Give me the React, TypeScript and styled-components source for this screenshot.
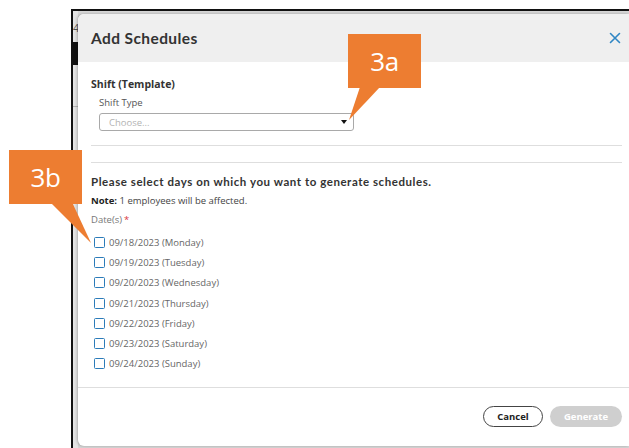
import React from 'react';
import styled, { createGlobalStyle } from 'styled-components';

const GlobalStyle = createGlobalStyle`
  html, body {
    margin: 0;
    padding: 0;
    background: #ffffff;
  }
  body {
    font-family: 'Open Sans', 'Noto Sans', sans-serif;
  }
`;

const Stage = styled.div`
  position: relative;
  width: 629px;
  height: 448px;
  overflow: hidden;
  padding: 9px 0 0 71px;
  box-sizing: border-box;
  background: #ffffff;
`;

const Frame = styled.div`
  height: 100%;
  display: flex;
  box-sizing: border-box;
  border-top: 2px solid #111;
  border-left: 2px solid #111;
  background: #d6d6d6;
  padding: 3px 0 0 0;
`;

const Peek = styled.div`
  width: 5px;
  flex: none;
  display: flex;
  flex-direction: column;
  overflow: hidden;
  background: #e4e4e4;
  margin-top: -3px;
`;

const PeekDigit = styled.span`
  font-size: 11px;
  color: #555;
  margin-top: 11px;
  line-height: 12px;
`;

const PeekBlock = styled.div`
  height: 23px;
  background: #111;
  margin-top: 8px;
`;

const PeekRule = styled.div`
  height: 1px;
  background: #b5b5b5;
  margin-top: 41px;
`;

const Modal = styled.div`
  flex: 1;
  display: flex;
  flex-direction: column;
  background: #fff;
  border-radius: 6px 0 0 6px;
  box-shadow: -1px 0 3px rgba(0, 0, 0, 0.25);
  margin-bottom: 2px;
  overflow: hidden;
`;

const Header = styled.div`
  height: 48px;
  flex: none;
  display: flex;
  align-items: center;
  justify-content: space-between;
  padding: 0 7px 0 13px;
  background: #efefef;
`;

const Title = styled.h2`
  margin: 0;
  font-family: 'Lato', 'Noto Sans', sans-serif;
  font-size: 15.5px;
  font-weight: 700;
  color: #333;
  letter-spacing: 0.4px;
`;

const Close = styled.button`
  border: 0;
  background: none;
  padding: 0;
  width: 14px;
  height: 14px;
  display: flex;
  align-items: center;
  justify-content: center;
  cursor: pointer;
`;

const Body = styled.div`
  flex: 1;
  display: flex;
  flex-direction: column;
  padding: 15px 7px 0 13px;
`;

const SectionLabel = styled.div`
  font-size: 10.5px;
  font-weight: 700;
  color: #333;
  line-height: 14px;
`;

const FieldLabel = styled.div`
  font-size: 9.5px;
  color: #555;
  line-height: 13px;
  margin: 5px 0 0 8px;
`;

const Select = styled.div`
  width: 255px;
  height: 18px;
  box-sizing: border-box;
  margin: 4px 0 0 8px;
  border: 1px solid #a9a9a9;
  border-radius: 3px;
  display: flex;
  align-items: center;
  justify-content: space-between;
  padding: 0 6px 0 9px;
  font-size: 9.5px;
  color: #b3b3b3;
`;

const Caret = styled.span`
  width: 0;
  height: 0;
  border-left: 3.5px solid transparent;
  border-right: 3.5px solid transparent;
  border-top: 4px solid #111;
`;

const Rule = styled.div<{ $gap: number }>`
  height: 1px;
  background: #dedede;
  margin-top: ${p => p.$gap}px;
`;

const Prompt = styled.div`
  margin-top: 11px;
  font-family: 'Lato', 'Noto Sans', sans-serif;
  font-size: 11.5px;
  font-weight: 700;
  color: #333;
  line-height: 15px;
  letter-spacing: 0.55px;
`;

const Note = styled.div`
  margin-top: 5px;
  font-size: 9.5px;
  color: #444;
  line-height: 13px;
  b {
    color: #222;
  }
`;

const DatesLabel = styled.div`
  margin-top: 6px;
  font-size: 9.5px;
  color: #777;
  line-height: 13px;
  span {
    color: #d9363e;
    margin-left: 2px;
  }
`;

const DayList = styled.div`
  display: flex;
  flex-direction: column;
  gap: 7.2px;
  margin-top: 10px;
  padding-left: 3px;
`;

const DayRow = styled.label`
  display: flex;
  align-items: center;
  gap: 4px;
  font-size: 9.5px;
  color: #666;
  line-height: 13px;
`;

const Box = styled.span`
  width: 11px;
  height: 11px;
  box-sizing: border-box;
  border: 1.6px solid #2b7bb9;
  border-radius: 1.5px;
  flex: none;
`;

const Footer = styled.div`
  flex: none;
  border-top: 1px solid #dedede;
  height: 59px;
  display: flex;
  align-items: center;
  justify-content: flex-end;
  gap: 7px;
  padding: 0 7px 2px 0;
  box-sizing: border-box;
`;

const Button = styled.button<{ $primary?: boolean }>`
  height: 21px;
  border-radius: 11px;
  font-family: 'Open Sans', sans-serif;
  font-size: 9.5px;
  font-weight: 700;
  padding: 0;
  width: ${p => (p.$primary ? '72px' : '60px')};
  border: ${p => (p.$primary ? '0' : '1px solid #444')};
  background: ${p => (p.$primary ? '#cfcfcf' : '#fff')};
  color: ${p => (p.$primary ? '#fff' : '#222')};
`;

const Callout = styled.div<{ $x: number; $y: number }>`
  position: absolute;
  left: ${p => p.$x}px;
  top: ${p => p.$y}px;
  width: 73px;
  height: 54px;
  background: #ed7d31;
  color: #fff;
  font-family: 'Open Sans', sans-serif;
  font-size: 26px;
  line-height: 54px;
  text-align: center;
  letter-spacing: -0.5px;
`;

const Tail = styled.svg`
  position: absolute;
  left: 0;
  top: 0;
  pointer-events: none;
`;

const days = [
  '09/18/2023 (Monday)',
  '09/19/2023 (Tuesday)',
  '09/20/2023 (Wednesday)',
  '09/21/2023 (Thursday)',
  '09/22/2023 (Friday)',
  '09/23/2023 (Saturday)',
  '09/24/2023 (Sunday)',
];

export default function App() {
  return (
    <>
      <GlobalStyle />
      <Stage>
        <Frame>
          <Peek>
            <PeekDigit>4</PeekDigit>
            <PeekBlock />
            <PeekRule />
          </Peek>
          <Modal>
            <Header>
              <Title>Add Schedules</Title>
              <Close aria-label="Close">
                <svg width="12" height="12" viewBox="0 0 12 12">
                  <path d="M1.5 1.5 L10.5 10.5 M10.5 1.5 L1.5 10.5" stroke="#2f86c4" strokeWidth="1.6" strokeLinecap="round" />
                </svg>
              </Close>
            </Header>
            <Body>
              <SectionLabel>Shift (Template)</SectionLabel>
              <FieldLabel>Shift Type</FieldLabel>
              <Select>
                Choose...
                <Caret />
              </Select>
              <Rule $gap={14} />
              <Rule $gap={16} />
              <Prompt>Please select days on which you want to generate schedules.</Prompt>
              <Note>
                <b>Note:</b> 1 employees will be affected.
              </Note>
              <DatesLabel>
                Date(s)<span>*</span>
              </DatesLabel>
              <DayList>
                {days.map(d => (
                  <DayRow key={d}>
                    <Box />
                    {d}
                  </DayRow>
                ))}
              </DayList>
            </Body>
            <Footer>
              <Button>Cancel</Button>
              <Button $primary>Generate</Button>
            </Footer>
          </Modal>
        </Frame>

        <Tail width="629" height="448">
          <polygon points="360,87 380,87 349,120" fill="#ed7d31" />
          <polygon points="50,202 72,202 91,243" fill="#ed7d31" />
        </Tail>
        <Callout $x={348} $y={34}>3a</Callout>
        <Callout $x={9} $y={150}>3b</Callout>
      </Stage>
    </>
  );
}
